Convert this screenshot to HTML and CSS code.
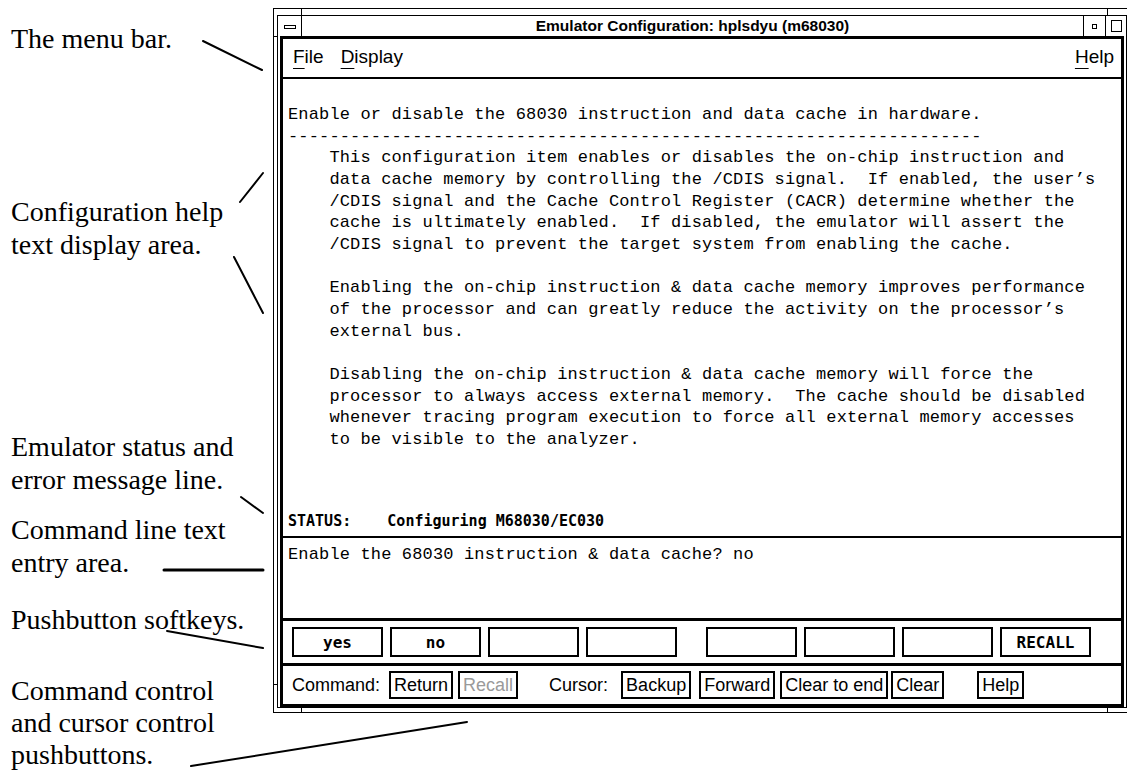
FILE: index.html
```html
<!DOCTYPE html>
<html lang="en">
<head>
  <meta charset="UTF-8">
  <title>Emulator Configuration</title>
  <link rel="stylesheet" href="styles.css">
</head>
<body>

  <div class="page">
    <div class="notes">
      <p class="note n1">The menu bar.</p>
      <p class="note n2">Configuration help<br>text display area.</p>
      <p class="note n3">Emulator status and<br>error message line.</p>
      <p class="note n4">Command line text<br>entry area.</p>
      <p class="note n5">Pushbutton softkeys.</p>
      <p class="note n6">Command control<br>and cursor control<br>pushbuttons.</p>
    </div>

    <div class="window">
      <span class="tick tick-top tick-l"></span>
      <span class="tick tick-top tick-r"></span>
      <span class="tick tick-bottom tick-l"></span>
      <span class="tick tick-bottom tick-r"></span>
      <span class="tick tick-side tick-side-l tick-t"></span>
      <span class="tick tick-side tick-side-l tick-b"></span>

      <div class="inner">
        <div class="titlebar">
          <div class="tb-menu"><span class="tb-bar"></span></div>
          <div class="tb-title">Emulator Configuration: hplsdyu (m68030)</div>
          <div class="tb-min"><span class="tb-dot"></span></div>
          <div class="tb-max"><span class="tb-square"></span></div>
        </div>

        <div class="client">
          <div class="menubar">
            <span class="menu-item"><u>F</u>ile</span>
            <span class="menu-item"><u>D</u>isplay</span>
            <span class="menu-item menu-help"><u>H</u>elp</span>
          </div>

<pre class="helptext">Enable or disable the 68030 instruction and data cache in hardware.
-------------------------------------------------------------------
    This configuration item enables or disables the on-chip instruction and
    data cache memory by controlling the /CDIS signal.  If enabled, the user’s
    /CDIS signal and the Cache Control Register (CACR) determine whether the
    cache is ultimately enabled.  If disabled, the emulator will assert the
    /CDIS signal to prevent the target system from enabling the cache.

    Enabling the on-chip instruction &amp; data cache memory improves performance
    of the processor and can greatly reduce the activity on the processor’s
    external bus.

    Disabling the on-chip instruction &amp; data cache memory will force the
    processor to always access external memory.  The cache should be disabled
    whenever tracing program execution to force all external memory accesses
    to be visible to the analyzer.</pre>

          <div class="status">STATUS:    Configuring M68030/EC030</div>

          <div class="cmdline">Enable the 68030 instruction &amp; data cache? no</div>

          <div class="softkeys">
            <span class="softkey">yes</span>
            <span class="softkey">no</span>
            <span class="softkey"></span>
            <span class="softkey"></span>
            <span class="softkey group-start"></span>
            <span class="softkey"></span>
            <span class="softkey"></span>
            <span class="softkey">RECALL</span>
          </div>

          <div class="cmdbar">
            <span class="cmd-label">Command:</span>
            <span class="pb">Return</span>
            <span class="pb pb-off">Recall</span>
            <span class="cmd-label cursor-label">Cursor:</span>
            <span class="pb pb-backup">Backup</span>
            <span class="pb pb-forward">Forward</span>
            <span class="pb pb-tight">Clear to end</span>
            <span class="pb pb-tighter">Clear</span>
            <span class="pb pb-help">Help</span>
          </div>
        </div>
      </div>
    </div>
  </div>

  <svg class="leaders" width="1127" height="774" viewBox="0 0 1127 774">
    <g stroke="#000" stroke-width="2" stroke-linecap="round">
      <line x1="203" y1="41" x2="262" y2="70"/>
      <line x1="240" y1="202" x2="263" y2="173"/>
      <line x1="234" y1="257" x2="263" y2="313"/>
      <line x1="241" y1="497" x2="263" y2="513"/>
      <line x1="164" y1="570" x2="263" y2="570" stroke-width="3"/>
      <line x1="167" y1="631" x2="263" y2="648"/>
      <line x1="191" y1="766" x2="467" y2="722"/>
    </g>
  </svg>

</body>
</html>
```

FILE: styles.css
```css
* { margin: 0; padding: 0; box-sizing: border-box; }
html, body { width: 1127px; height: 774px; overflow: hidden; background: #fff; }
body { font-family: "Liberation Sans", Arial, sans-serif; color: #000; position: relative; }

.page { display: flex; align-items: flex-start; }

/* callout labels on the left */
.notes { width: 273px; flex: none; padding-left: 11px; font-family: "Liberation Serif", "Times New Roman", serif; font-size: 28px; line-height: 33px; }
.n1 { margin-top: 22px; }
.n2 { margin-top: 140px; }
.n3 { margin-top: 169px; }
.n4 { margin-top: 17px; }
.n5 { margin-top: 24px; }
.n6 { margin-top: 39px; line-height: 32px; }

.leaders { position: absolute; left: 0; top: 0; pointer-events: none; }

/* window frame */
.window { flex: none; position: relative; width: 858px; height: 705px; margin-top: 8px; border: 1px solid #000; padding: 6px 3px 4px 3px; background: #fff; }
.tick { position: absolute; background: #000; }
.tick-top { top: 0; width: 1px; height: 6px; }
.tick-bottom { bottom: 0; width: 1px; height: 4px; }
.tick-l { left: 27px; }
.tick-r { left: 833px; }
.tick-side { width: 3px; height: 1px; }
.tick-side-l { left: 0; }
.tick-t { top: 27px; }
.tick-b { top: 675px; }

.inner { height: 100%; border: 1px solid #000; display: flex; flex-direction: column; }

.titlebar { height: 20px; flex: none; display: flex; }
.tb-menu { width: 24px; border-right: 1px solid #000; display: flex; align-items: center; justify-content: center; padding-top: 1px; }
.tb-bar { width: 12px; height: 4px; border: 1px solid #000; }
.tb-title { flex: 1; text-align: center; font-weight: bold; font-size: 15.5px; line-height: 20px; }
.tb-min { width: 23px; border-left: 1px solid #000; border-right: 1px solid #000; display: flex; align-items: center; justify-content: center; }
.tb-dot { width: 5px; height: 5px; border: 1px solid #000; }
.tb-max { width: 20px; display: flex; align-items: center; justify-content: center; }
.tb-square { width: 11px; height: 12px; border: 1px solid #000; }

.client { flex: 1; margin: 0 2px; border: 3px solid #000; display: flex; flex-direction: column; }

.menubar { height: 40px; flex: none; border-bottom: 2px solid #000; display: flex; align-items: center; padding: 0 10px 2px 10px; font-size: 19px; }
.menu-item { margin-right: 17px; }
.menu-item u { text-decoration-thickness: 1px; text-underline-offset: 5px; }
.menu-help { margin-left: auto; margin-right: -3px; }

.helptext { height: 426px; flex: none; padding: 25px 0 0 5px; font-family: "Liberation Mono", "Courier New", monospace; font-size: 17px; line-height: 21.67px; letter-spacing: 0.15px; white-space: pre; overflow: hidden; }

.status { height: 31px; flex: none; display: flex; align-items: center; padding-left: 5px; font-family: "DejaVu Sans Mono", monospace; font-size: 15px; font-weight: bold; white-space: pre; }

.cmdline { height: 85px; flex: none; border-top: 2px solid #000; border-bottom: 3px solid #000; padding: 6px 0 0 5px; font-family: "Liberation Mono", "Courier New", monospace; font-size: 17px; line-height: 21.67px; letter-spacing: 0.15px; white-space: pre; }

.softkeys { height: 45px; flex: none; border-bottom: 3px solid #000; display: flex; gap: 7px; padding: 6px 0 0 9px; }
.softkey { width: 91px; height: 30px; border: 2px solid #000; display: flex; align-items: center; justify-content: center; font-family: "DejaVu Sans Mono", monospace; font-size: 16px; font-weight: bold; }
.softkey.group-start { margin-left: 22px; }

.cmdbar { flex: 1; display: flex; align-items: center; padding-left: 9px; font-size: 18px; }
.cmd-label { margin-right: 9px; }
.cursor-label { margin-left: 31px; margin-right: 13px; }
.pb { height: 28px; border: 2px solid #000; padding: 0 3px; display: flex; align-items: center; }
.pb-off { margin-left: 5px; color: #9a9a9a; }
.pb-forward { margin-left: 8px; }
.pb-tight { margin-left: 5px; }
.pb-tighter { margin-left: 3px; }
.pb-help { margin-left: 33px; }
```
